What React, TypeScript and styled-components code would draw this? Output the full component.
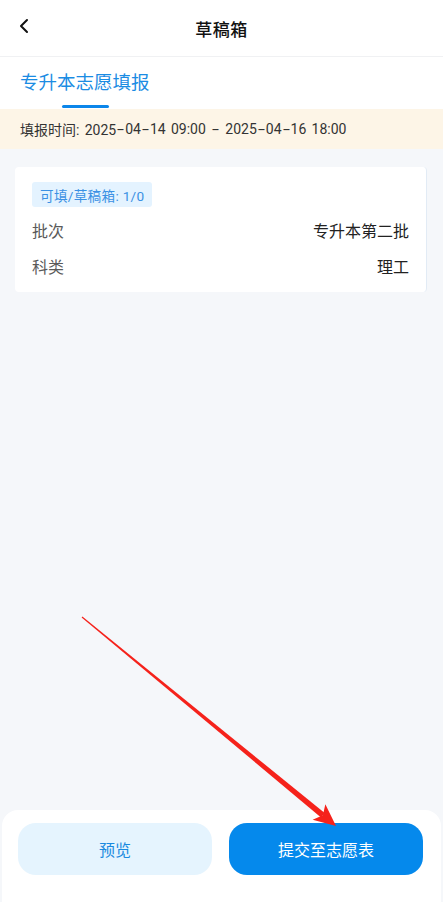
import React from "react";
import styled, { createGlobalStyle } from "styled-components";

const Global = createGlobalStyle`
  html, body { margin: 0; padding: 0; background: #ffffff; }
  body { font-family: Roboto, "Noto Sans CJK SC", sans-serif; -webkit-font-smoothing: antialiased; }
  * { box-sizing: border-box; }
`;

const Page = styled.div`
  position: relative;
  width: 443px;
  min-height: 902px;
  display: flex;
  flex-direction: column;
  background: #ffffff;
  overflow: hidden;
`;

const Header = styled.header`
  height: 57px;
  flex: none;
  display: flex;
  align-items: center;
  justify-content: center;
  position: relative;
  border-bottom: 1px solid #f0f1f3;
`;

const BackButton = styled.button`
  position: absolute;
  left: 14px;
  top: 14px;
  width: 20px;
  height: 24px;
  padding: 0;
  border: 0;
  background: transparent;
  display: flex;
  align-items: center;
  justify-content: center;
`;

const Title = styled.h1`
  margin: 0;
  margin-top: 1px;
  font-size: 17px;
  font-weight: 500;
  color: #111111;
  letter-spacing: 0.5px;
`;

const TabBar = styled.nav`
  height: 52px;
  flex: none;
  display: flex;
  padding-left: 20px;
`;

const Tab = styled.div<{ $active?: boolean }>`
  position: relative;
  display: flex;
  align-items: center;
  height: 100%;
  padding-bottom: 4px;
  font-size: 18.5px;
  color: ${(p) => (p.$active ? "#1b8ce3" : "#333")};
  &::after {
    content: "";
    display: ${(p) => (p.$active ? "block" : "none")};
    position: absolute;
    left: 42px;
    bottom: 1px;
    width: 47px;
    height: 3px;
    border-radius: 2px;
    background: #0b86ea;
  }
`;

const Notice = styled.div`
  height: 40px;
  flex: none;
  display: flex;
  align-items: center;
  padding-left: 20px;
  background: #fdf5e7;
  color: #333333;
  font-size: 14px;
  word-spacing: 1.8px;
  white-space: pre;
`;

const Dash = styled.span`
  display: inline-block;
  width: 9px;
  text-align: center;
  transform: scaleX(1.8);
`;

const Content = styled.main`
  flex: 1;
  background: #f5f7fa;
  padding: 18px 16px 0 15px;
`;

const Card = styled.section`
  background: #ffffff;
  border-radius: 4px;
  border-right: 1px solid #e2ebf5;
  padding: 15px 17px 8px 17px;
`;

const Badge = styled.span`
  display: inline-flex;
  align-items: center;
  height: 25px;
  padding: 0 8px;
  border-radius: 3px;
  background: #e4f3ff;
  color: #3b91e4;
  font-size: 13.6px;
  letter-spacing: 0.3px;
  white-space: pre;
  margin-bottom: 5px;
`;

const Row = styled.div`
  display: flex;
  justify-content: space-between;
  align-items: center;
  height: 36px;
  font-size: 16px;
`;

const Label = styled.span`
  color: #5a5a5a;
`;

const Value = styled.span`
  color: #222222;
`;

const BottomBar = styled.footer`
  flex: none;
  height: 92px;
  margin-top: -92px;
  position: relative;
  background: #ffffff;
  border-radius: 16px 16px 0 0;
  margin-left: 2px;
  margin-right: 2px;
  padding: 13px 18px 0 16px;
  display: grid;
  grid-template-columns: 1fr 1fr;
  column-gap: 17px;
  align-items: start;
`;

const Spacer = styled.div`
  height: 92px;
  background: #f5f7fa;
  flex: none;
`;

const ActionButton = styled.button<{ $primary?: boolean }>`
  height: 52px;
  border: 0;
  border-radius: 18px;
  font-family: inherit;
  font-size: 16px;
  background: ${(p) => (p.$primary ? "#0589ec" : "#e5f4fe")};
  color: ${(p) => (p.$primary ? "#ffffff" : "#1b8ae0")};
`;

const ArrowLayer = styled.svg`
  position: absolute;
  left: 0;
  top: 0;
  pointer-events: none;
`;

function WideDashes({ text }: { text: string }) {
  const parts = text.split("-");
  return (
    <>
      {parts.map((p, i) => (
        <React.Fragment key={i}>
          {p}
          {i < parts.length - 1 && <Dash>-</Dash>}
        </React.Fragment>
      ))}
    </>
  );
}

export default function App() {
  const sx = 82, sy = 617, tx = 336, ty = 826;
  const dx = tx - sx, dy = ty - sy;
  const len = Math.hypot(dx, dy);
  const ux = dx / len, uy = dy / len;
  const px = -uy, py = ux;
  const headLen = 22, headW = 10;
  const bx = tx - ux * headLen, by = ty - uy * headLen;
  const ex = tx - ux * (headLen - 5), ey = ty - uy * (headLen - 5);
  const shaft = [
    [sx + px * 0.6, sy + py * 0.6],
    [ex + px * 2.9, ey + py * 2.9],
    [ex - px * 2.9, ey - py * 2.9],
    [sx - px * 0.6, sy - py * 0.6],
  ];
  const head = [
    [tx, ty],
    [bx + px * headW, by + py * headW],
    [ex, ey],
    [bx - px * headW, by - py * headW],
  ];
  const pts = (a: number[][]) => a.map((p) => p.join(",")).join(" ");

  return (
    <>
      <Global />
      <Page>
        <Header>
          <BackButton aria-label="返回">
            <svg width="12" height="16" viewBox="0 0 12 16">
              <path d="M9 2 L3 8 L9 14" fill="none" stroke="#111" strokeWidth="2" strokeLinecap="round" strokeLinejoin="round" />
            </svg>
          </BackButton>
          <Title>草稿箱</Title>
        </Header>
        <TabBar>
          <Tab $active>专升本志愿填报</Tab>
        </TabBar>
        <Notice>
          <WideDashes text="填报时间: 2025-04-14 09:00 - 2025-04-16 18:00" />
        </Notice>
        <Content>
          <Card>
            <Badge>可填/草稿箱: 1/0</Badge>
            <Row>
              <Label>批次</Label>
              <Value>专升本第二批</Value>
            </Row>
            <Row>
              <Label>科类</Label>
              <Value>理工</Value>
            </Row>
          </Card>
        </Content>
        <Spacer />
        <BottomBar>
          <ActionButton>预览</ActionButton>
          <ActionButton $primary>提交至志愿表</ActionButton>
        </BottomBar>
        <ArrowLayer width="443" height="902" viewBox="0 0 443 902">
          <polygon points={pts(shaft)} fill="#f5221b" />
          <polygon points={pts(head)} fill="#f5221b" />
        </ArrowLayer>
      </Page>
    </>
  );
}
